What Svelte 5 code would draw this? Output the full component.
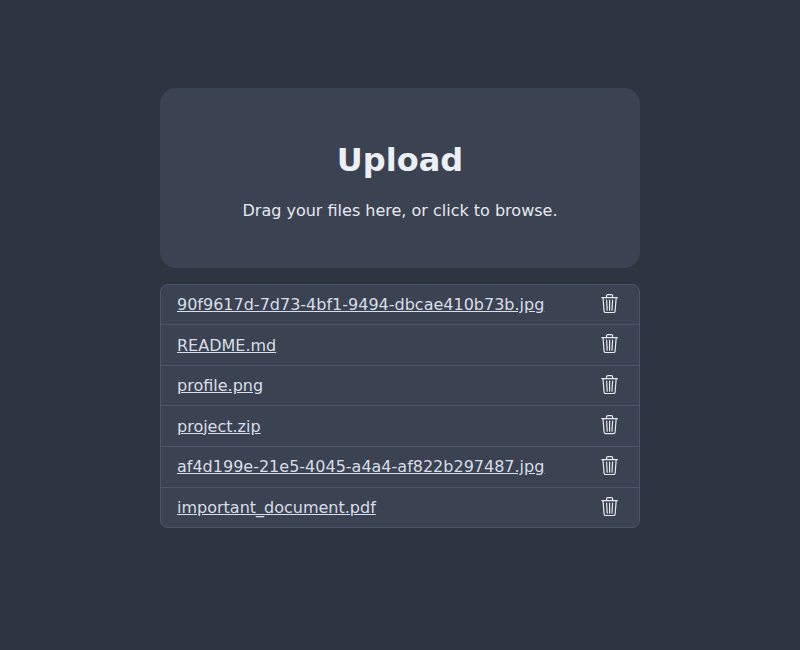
<script>
  const files = [
    '90f9617d-7d73-4bf1-9494-dbcae410b73b.jpg',
    'README.md',
    'profile.png',
    'project.zip',
    'af4d199e-21e5-4045-a4a4-af822b297487.jpg',
    'important_document.pdf'
  ];
</script>

<main>
  <section class="dropzone">
    <h1>Upload</h1>
    <p>Drag your files here, or click to browse.</p>
  </section>
  <ul class="files">
    {#each files as file}
      <li>
        <a href="#file">{file}</a>
        <button aria-label="Delete">
          <svg viewBox="0 0 16 16" fill="currentColor">
            <path d="M6.5 1h3a.5.5 0 0 1 .5.5v1H6v-1a.5.5 0 0 1 .5-.5ZM11 2.5v-1A1.5 1.5 0 0 0 9.5 0h-3A1.5 1.5 0 0 0 5 1.5v1H1.5a.5.5 0 0 0 0 1h.538l.853 10.66A2 2 0 0 0 4.885 16h6.23a2 2 0 0 0 1.994-1.84l.853-10.66h.538a.5.5 0 0 0 0-1H11Zm1.958 1-.846 10.58a1 1 0 0 1-.997.92h-6.23a1 1 0 0 1-.997-.92L3.042 3.5h9.916Zm-7.487 1a.5.5 0 0 1 .528.47l.5 8.5a.5.5 0 0 1-.998.06L5 5.03a.5.5 0 0 1 .47-.53Zm5.058 0a.5.5 0 0 1 .47.53l-.5 8.5a.5.5 0 1 1-.998-.06l.5-8.5a.5.5 0 0 1 .528-.47ZM8 4.5a.5.5 0 0 1 .5.5v8.5a.5.5 0 0 1-1 0V5a.5.5 0 0 1 .5-.5Z" />
          </svg>
        </button>
      </li>
    {/each}
  </ul>
</main>

<style>
  :global(body) {
    background: #2e3440;
  }
  main {
    width: 480px;
    margin: 0 auto;
    padding-top: 88px;
    font: 16px/24px "DejaVu Sans", sans-serif;
    color: #e5e9f0;
  }
  .dropzone {
    box-sizing: border-box;
    height: 179.6px;
    padding-top: 52px;
    border-radius: 16px;
    background: #3b4252;
    text-align: center;
  }
  h1 {
    margin: 0;
    font-size: 32px;
    line-height: 40px;
    font-weight: 700;
    color: #eceff4;
  }
  p {
    margin: 19px 0 0;
  }
  .files {
    list-style: none;
    margin: 16px 0 0;
    padding: 0;
    border: 1px solid #4c566a;
    border-radius: 8px;
    background: #3b4252;
  }
  li {
    display: flex;
    align-items: center;
    justify-content: space-between;
    box-sizing: border-box;
    height: 40.6px;
    padding: 0 19.8px 0 16px;
    border-bottom: 1px solid #4c566a;
  }
  li:last-child {
    height: 39.6px;
    border-bottom: 0;
  }
  a {
    padding-top: 1.2px;
    color: #d8dee9;
  }
  button {
    display: flex;
    margin: 0;
    padding: 0 0 2.4px;
    border: 0;
    background: none;
    color: #e5e9f0;
    cursor: pointer;
  }
  svg {
    width: 19.2px;
    height: 19.2px;
  }
</style>
